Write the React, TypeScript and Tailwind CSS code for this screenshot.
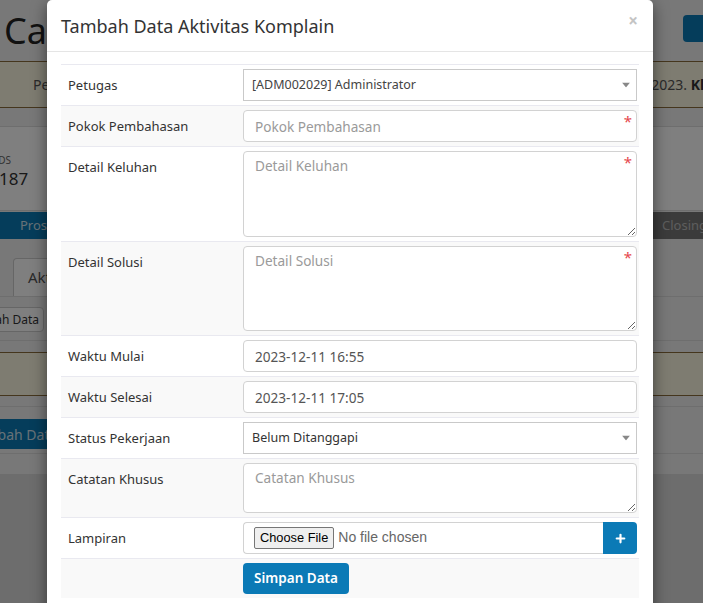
import { Plus } from "lucide-react";

const font = { fontFamily: '"Noto Sans", "Open Sans", sans-serif' };

function Asterisk() {
  return (
    <span className="absolute right-[5px] top-[4px] text-[15px] leading-none text-[#e5484d]">*</span>
  );
}

function Caret() {
  return (
    <svg className="absolute right-[6px] top-1/2 -translate-y-1/2" width="8" height="5" viewBox="0 0 8 5">
      <path d="M0 0h8L4 5z" fill="#888" />
    </svg>
  );
}

function Row({
  label,
  striped,
  children,
}: {
  label: string;
  striped?: boolean;
  children: React.ReactNode;
}) {
  return (
    <div className={`flex border-t border-[#e9e9f0] ${striped ? "bg-[#f9f9f9]" : "bg-white"}`}>
      <div className="w-[175px] shrink-0 px-[7px] pt-[11px] text-[13px] leading-[18px] text-[#333]">
        {label}
      </div>
      <div className="flex-1 py-[4px] pl-[7px] pr-[2px]">{children}</div>
    </div>
  );
}

function TextInput({ value, placeholder, required }: { value?: string; placeholder?: string; required?: boolean }) {
  return (
    <div className="relative flex">
      <input
        readOnly
        value={value ?? ""}
        placeholder={placeholder}
        className="h-[32px] w-full rounded-[4px] border border-[#d2d2d2] bg-white px-[11px] text-[13.6px] text-[#555] placeholder:text-[#9a9a9a] outline-none"
        style={font}
      />
      {required && <Asterisk />}
    </div>
  );
}

function TextArea({ placeholder, h, required }: { placeholder: string; h: string; required?: boolean }) {
  return (
    <div className="relative flex">
      <textarea
        readOnly
        placeholder={placeholder}
        className={`${h} block w-full rounded-[4px] border border-[#d2d2d2] bg-white px-[11px] py-[4px] text-[13.6px] text-[#555] placeholder:text-[#9a9a9a] outline-none`}
        style={font}
      />
      {required && <Asterisk />}
    </div>
  );
}

function Select({ value, dark }: { value: string; dark?: boolean }) {
  return (
    <div className="relative flex h-[32px] items-center border border-[#c9c9c9] bg-white pl-[8px]">
      <span className={`text-[12.5px] ${dark ? "text-[#333]" : "text-[#444]"}`}>{value}</span>
      <Caret />
    </div>
  );
}

function Background() {
  return (
    <div className="flex h-full flex-col bg-[#f1f1f1]" style={font}>
      <div className="flex h-[61px] items-center justify-between pl-[4px]">
        <span className="text-[36px] text-[#222]">Calon Pelanggan</span>
        <div className="mt-[-4px] h-[27px] w-[20px] rounded-l-[4px] bg-[#0b7ab6]" />
      </div>
      <div className="flex h-[47px] items-center justify-between border-y border-[#8a6d3b] bg-[#fcf8e3] pl-[33px] pr-0 text-[14px] text-[#555]">
        <span>Perhatian: data ditampilkan</span>
        <span className="mr-[-14px]">
          12 Desember 2023. <b className="text-[#333]">Klik</b>
        </span>
      </div>
      <div className="h-[18px]" />
      <div className="h-[84px] border-t border-[#ddd] bg-white pt-[26px]">
        <div className="ml-[-19px] text-[10px] leading-[14px] text-[#666]">LEADS</div>
        <div className="ml-[-1px] text-[17px] leading-[24px] text-[#333]">187</div>
      </div>
      <div className="h-[2px] border-t border-[#ddd]" />
      <div className="flex h-[27px] text-[13px]">
        <div className="flex flex-1 items-center bg-[#0b7ab6] pl-[20px] text-[#cfe3ee]">Prospek</div>
        <div className="flex w-[50px] items-center justify-start bg-[#777] pl-[9px] text-[#bbb]">Closing</div>
      </div>
      <div className="h-[20px]" />
      <div className="flex h-[38px] items-end border-b border-[#ddd] pl-[13px]">
        <div className="flex h-[38px] w-[120px] items-center rounded-t-[4px] border border-b-0 border-[#ccc] bg-white pl-[14px] text-[15px] text-[#555]">
          Aktivitas
        </div>
      </div>
      <div className="pt-[10px]">
        <div className="ml-[-40px] flex h-[25px] w-[84px] items-center justify-end rounded-[4px] border border-[#ccc] bg-white pr-[4px] text-[12px] text-[#333]">
          Tambah Data
        </div>
      </div>
      <div className="mt-[8px] h-[1px] bg-[#ddd]" />
      <div className="mt-[11px] h-[44px] border-y border-[#8a6d3b] bg-[#fcf8e3]" />
      <div className="mt-[10px] h-[1px] bg-[#ddd]" />
      <div className="mt-[12px]">
        <div className="ml-[-42px] flex h-[30px] w-[130px] items-center rounded-[4px] bg-[#0b7ab6] pl-[12px] text-[14px] text-[#cfe3ee]">
          Tambah Data
        </div>
      </div>
      <div className="mt-[4px] h-[21px] border-t border-[#ddd] bg-[#f1f1f1]" />
      <div className="flex-1 bg-[#dadada]" />
    </div>
  );
}

export default function App() {
  return (
    <div className="relative h-[603px] w-full overflow-hidden" style={font}>
      <Background />
      <div className="absolute inset-0 bg-black/50" />

      <div className="absolute left-[47px] top-0 h-[640px] w-[606px] rounded-[5px] bg-white shadow-[0_5px_15px_rgba(0,0,0,0.5)]">
        <div className="flex h-[52px] items-center justify-between border-b border-[#e5e5e5] pl-[14px] pr-[15px]">
          <h4 className="pt-[2px] text-[18px] text-[#333]">Tambah Data Aktivitas Komplain</h4>
          <span className="mt-[-10px] text-[17px] font-bold leading-none text-[#c4c4c4]">×</span>
        </div>

        <div className="px-[14px] pt-[12px]">
          <Row label="Petugas">
            <Select value="[ADM002029] Administrator" />
          </Row>
          <Row label="Pokok Pembahasan" striped>
            <TextInput placeholder="Pokok Pembahasan" required />
          </Row>
          <Row label="Detail Keluhan">
            <TextArea placeholder="Detail Keluhan" h="h-[86px]" required />
          </Row>
          <Row label="Detail Solusi" striped>
            <TextArea placeholder="Detail Solusi" h="h-[85px]" required />
          </Row>
          <Row label="Waktu Mulai">
            <TextInput value="2023-12-11 16:55" />
          </Row>
          <Row label="Waktu Selesai" striped>
            <TextInput value="2023-12-11 17:05" />
          </Row>
          <Row label="Status Pekerjaan">
            <Select value="Belum Ditanggapi" dark />
          </Row>
          <Row label="Catatan Khusus" striped>
            <TextArea placeholder="Catatan Khusus" h="h-[50px]" />
          </Row>
          <Row label="Lampiran">
            <div className="flex h-[32px]">
              <div className="flex flex-1 items-center rounded-l-[4px] border border-r-0 border-[#d2d2d2] bg-white pl-[10px]">
                <input
                  type="file"
                  className="text-[14px] text-[#666] file:mr-[4px] file:rounded-[2px] file:border file:border-solid file:border-[#767676] file:bg-[#efefef] file:px-[5px] file:py-0 file:text-[12.8px] file:text-black"
                  style={{ fontFamily: '"Liberation Sans", Arial, sans-serif' }}
                />
              </div>
              <button className="flex w-[34px] items-center justify-center rounded-r-[4px] bg-[#0b7ab6] text-white">
                <Plus size={13} strokeWidth={4} />
              </button>
            </div>
          </Row>
          <div className="flex border-t border-[#e9e9f0] bg-[#f9f9f9] py-[4px] pl-[182px]">
            <button className="h-[31px] w-[106px] rounded-[4px] bg-[#0b7ab6] text-[13.5px] font-semibold text-white">
              Simpan Data
            </button>
          </div>
        </div>
      </div>
    </div>
  );
}
